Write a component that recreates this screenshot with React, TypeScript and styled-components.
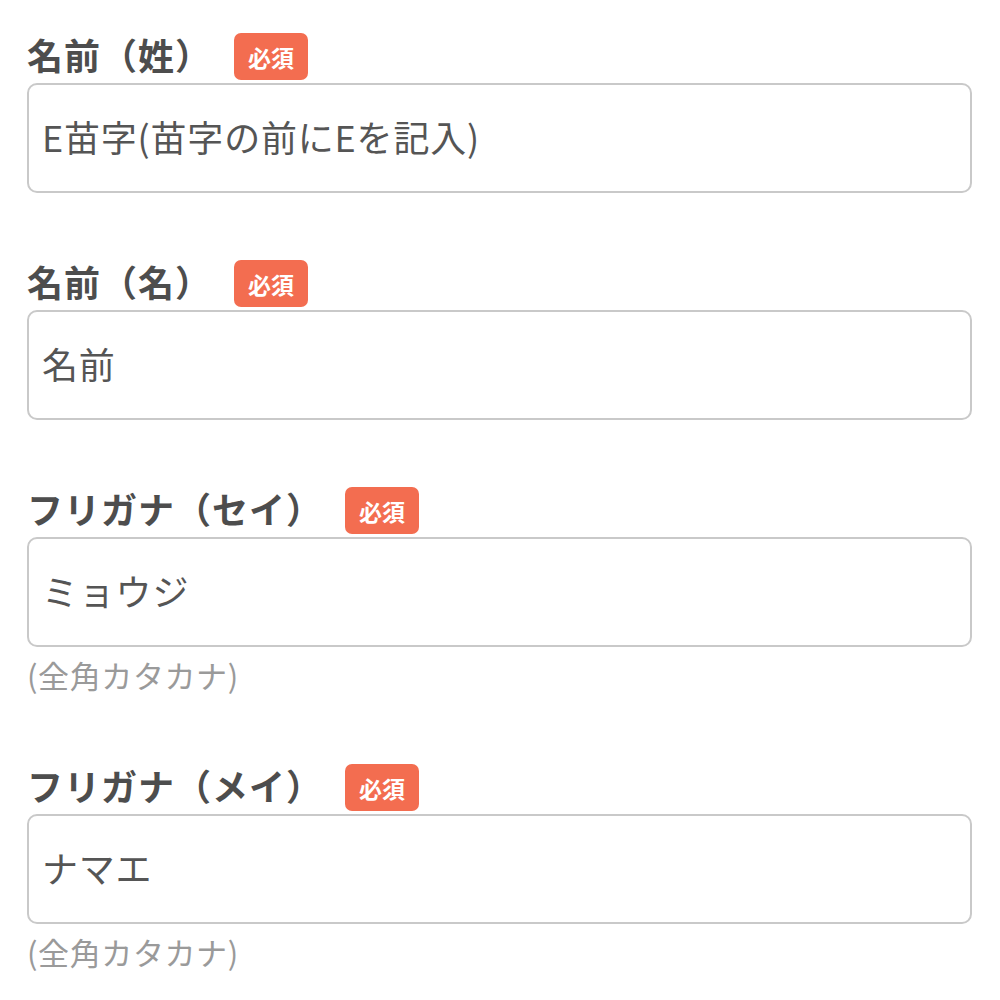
import React from "react";
import styled, { createGlobalStyle } from "styled-components";

const GlobalStyle = createGlobalStyle`
  html, body {
    margin: 0;
    padding: 0;
    background: #ffffff;
  }
  body {
    font-family: "Noto Sans CJK JP", "Noto Sans", sans-serif;
  }
`;

const Form = styled.div`
  display: flex;
  flex-direction: column;
  gap: 67px;
  padding: 33px 28px 0 27px;
`;

const Field = styled.div`
  display: flex;
  flex-direction: column;
`;

const LabelRow = styled.div`
  display: flex;
  align-items: center;
  height: 47px;
  margin-bottom: 3px;
`;

const Label = styled.label`
  font-size: 36px;
  font-weight: 700;
  color: #4d4d4d;
  letter-spacing: 1px;
  line-height: 1;
  padding-bottom: 6px;
`;

const Badge = styled.span`
  display: inline-flex;
  align-items: center;
  justify-content: center;
  margin-left: 22px;
  width: 74px;
  height: 47px;
  border-radius: 7px;
  background: #f36d50;
  color: #ffffff;
  font-size: 23px;
  font-weight: 700;
`;

const Input = styled.input`
  box-sizing: border-box;
  width: 100%;
  height: 110px;
  border: 2px solid #c9c9c9;
  border-radius: 10px;
  padding: 0 13px 4px;
  font-family: inherit;
  font-size: 36px;
  letter-spacing: 0.8px;
  color: #555555;
  background: #ffffff;
  outline: none;
`;

const Hint = styled.div`
  margin-top: 6px;
  height: 44px;
  line-height: 44px;
  font-size: 31px;
  letter-spacing: 0.6px;
  color: #9a9a9a;
`;

type FieldData = {
  label: string;
  value: string;
  hint?: string;
};

const FIELDS: FieldData[] = [
  { label: "名前（姓）", value: "E苗字(苗字の前にEを記入)" },
  { label: "名前（名）", value: "名前" },
  { label: "フリガナ（セイ）", value: "ミョウジ", hint: "(全角カタカナ)" },
  { label: "フリガナ（メイ）", value: "ナマエ", hint: "(全角カタカナ)" },
];

const App: React.FC = () => {
  return (
    <>
      <GlobalStyle />
      <Form>
        {FIELDS.map((field, index) => (
          <Field key={index}>
            <LabelRow>
              <Label>{field.label}</Label>
              <Badge>必須</Badge>
            </LabelRow>
            <Input type="text" defaultValue={field.value} readOnly />
            {field.hint && <Hint>{field.hint}</Hint>}
          </Field>
        ))}
      </Form>
    </>
  );
};

export default App;
